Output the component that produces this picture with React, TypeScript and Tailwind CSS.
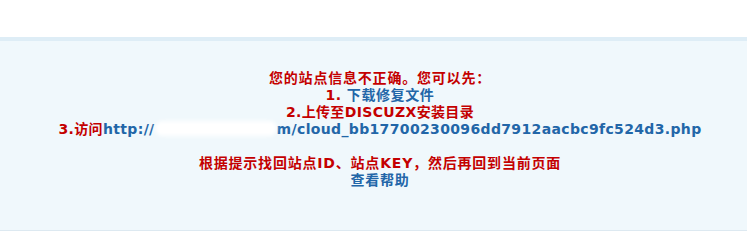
const red = "text-[#c40000]";
const blue = "text-[#2266a8]";

const App = () => {
  return (
    <div
      className="w-[747px] h-[231px] bg-white font-bold text-[14px] leading-[17px] tracking-[0.35px]"
      style={{ fontFamily: '"DejaVu Sans", "Noto Sans CJK SC", sans-serif' }}
    >
      {/* top blank strip */}
      <div className="h-[37px] bg-white" />

      {/* notice panel */}
      <div className="border-t-4 border-b border-t-[#deedf6] border-b-[#dde9f1] bg-[#f0f8fc] pt-[29px] pb-[41px] pl-[13px] text-center">
        <p className={`${red} tracking-[0.8px]`}>您的站点信息不正确。您可以先：</p>
        <p>
          <span className={red}>1.</span>
          <a className={`${blue} tracking-[0.6px]`}> 下载修复文件</a>
        </p>
        <p className={red}>2.上传至DISCUZX安装目录</p>
        <p className="whitespace-nowrap">
          <span className={red}>3.访问</span>
          <a className={blue}>
            http://
            <span className="inline-block w-[122px] h-[15px] align-[-2px] bg-white rounded-full blur-[2px]" />
            m/cloud_bb17700230096dd7912aacbc9fc524d3.php
          </a>
        </p>
        <p className="h-[17px]" />
        <p className={`${red} tracking-[0.8px]`}>根据提示找回站点ID、站点KEY，然后再回到当前页面</p>
        <p>
          <a className={`${blue} tracking-[0.8px]`}>查看帮助</a>
        </p>
      </div>
    </div>
  );
};

export default App;
